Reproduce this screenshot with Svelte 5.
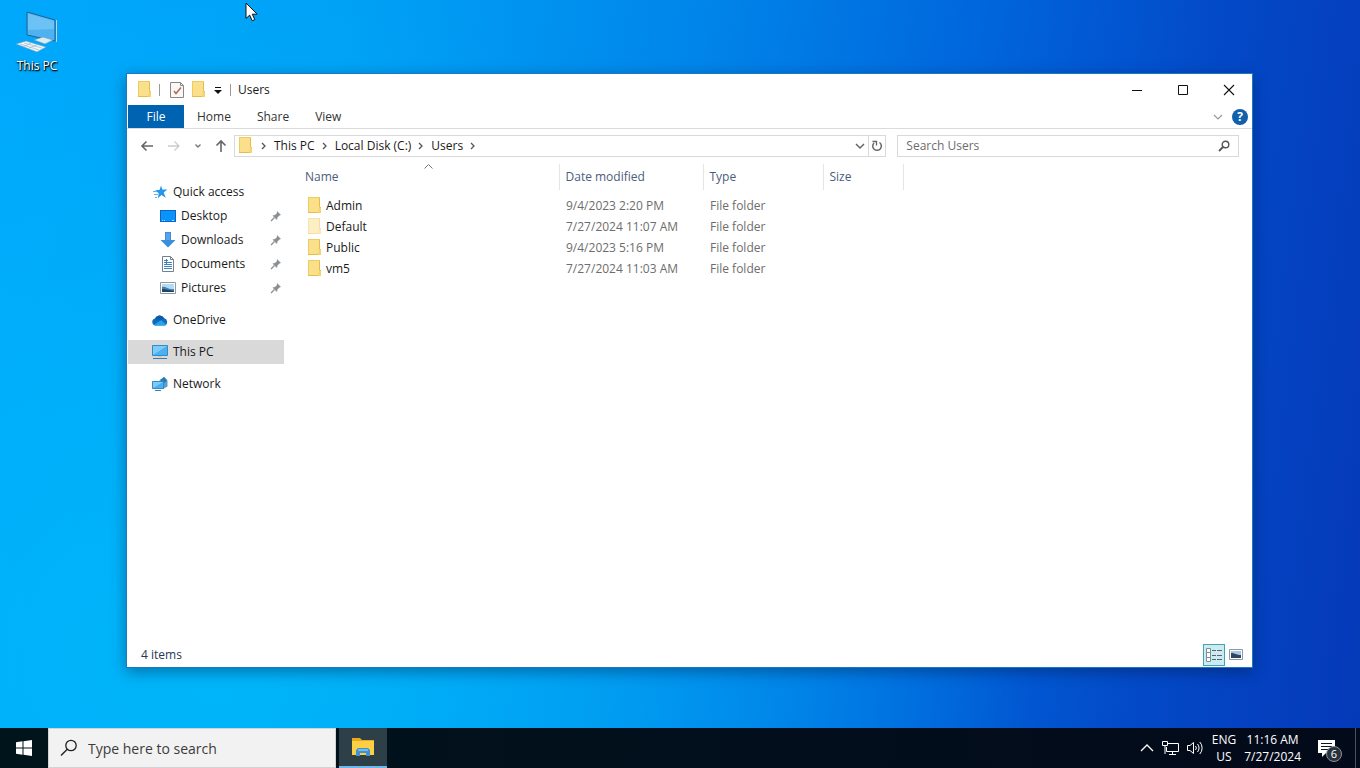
<script lang="ts">
  type NavItem = { label: string; icon: string; pinned?: boolean; top?: boolean; gap?: boolean };

  const tabs = ['Home', 'Share', 'View'];
  const crumbs = ['This PC', 'Local Disk (C:)', 'Users'];

  const navItems: NavItem[] = [
    { label: 'Quick access', icon: 'star', top: true },
    { label: 'Desktop', icon: 'desktop', pinned: true },
    { label: 'Downloads', icon: 'download', pinned: true },
    { label: 'Documents', icon: 'document', pinned: true },
    { label: 'Pictures', icon: 'picture', pinned: true },
    { label: 'OneDrive', icon: 'cloud', top: true, gap: true },
    { label: 'This PC', icon: 'pc', top: true, gap: true },
    { label: 'Network', icon: 'network', top: true, gap: true },
  ];

  const files = [
    { name: 'Admin', modified: '9/4/2023 2:20 PM' },
    { name: 'Default', modified: '7/27/2024 11:07 AM', hidden: true },
    { name: 'Public', modified: '9/4/2023 5:16 PM' },
    { name: 'vm5', modified: '7/27/2024 11:03 AM' },
  ];

  let selected = $state('This PC');
  let query = $state('');
  let taskbarQuery = $state('');
</script>

{#snippet folder(faded = false)}
  <svg class="folder" class:faded width="16" height="18" viewBox="0 0 16 18" aria-hidden="true">
    <path d="M1 0h12v16H1z" fill="#fbe08b" />
    <path d="M1 0h12v1H1zM1 1h1v15H1z" fill="#efcb62" />
    <path d="M12 1h1v9h1v6H1v-1h11z" fill="#e6bd4c" />
    <path d="M12 10l2 1v5h-3z" fill="#f5d36f" />
  </svg>
{/snippet}

{#snippet chevron()}
  <svg width="6" height="8" viewBox="0 0 6 8" aria-hidden="true">
    <path d="M1 1l3 3-3 3" fill="none" stroke="#555" stroke-width="1.3" />
  </svg>
{/snippet}

{#snippet navIcon(name: string)}
  <svg width="16" height="16" viewBox="0 0 16 16" aria-hidden="true">
    {#if name === 'star'}
      <path d="M9 1.500l1.300 4 5 0-3.600 3 2 5.200-4.200-2.700-3.700 3.300 1-5L3 6.500l4.700-.8z" fill="#2497e8" />
      <path d="M1 7.500h4M2 10.500h4M3 13.500h2" stroke="#5db7f2" />
    {:else if name === 'desktop'}
      <path d="M0 2h16v12H0z" fill="#0b66bd" />
      <path d="M1 3h14v10H1z" fill="#0a93fb" />
      <path d="M2 12.500h1M4 12.500h1M12 12.500h2" stroke="#a8dcff" />
    {:else if name === 'download'}
      <path d="M5 0h6v8h4.500L8 15.500.5 8H5z" fill="#3b8edb" />
      <path d="M6 1h4v7H6z" fill="#57a5e8" />
    {:else if name === 'document'}
      <path d="M2.500.5h8l3 3v12h-11z" fill="#fff" stroke="#73818e" />
      <path d="M10.500.5v3h3" fill="none" stroke="#73818e" />
      <path d="M4 4.500h4M4 6.500h8M4 8.500h8M4 10.500h8M4 12.500h8" stroke="#3c83c0" />
      <path d="M6.500 3v5" stroke="#3c83c0" />
    {:else if name === 'picture'}
      <path d="M.5 2.500h15v11H.5z" fill="#fff" stroke="#8b98a5" />
      <path d="M2 4h12v8H2z" fill="#b4dbf5" />
      <path d="M2 7c4-1 6 3 12 2v3H2z" fill="#4b7fa3" />
      <path d="M2 9c4 0 7 1 12 2v1H2z" fill="#1b4668" />
    {:else if name === 'cloud'}
      <path d="M3.500 13.500A3.500 3.500 0 0 1 3 6.600 5 5 0 0 1 12 6a4 4 0 0 1 1 7.500z" fill="#0f6cbd" />
      <path d="M2 13l7-5 5.500 5-1.500.5H3.500z" fill="#28a3ea" />
      <path d="M3 6.600A5 5 0 0 1 12 6L8.500 8.500z" fill="#0a5ba8" />
    {:else if name === 'pc'}
      <path d="M.5 1.500h15v10H.5z" fill="#4bb0f2" stroke="#2f8cc4" />
      <path d="M1 2h14L1 11z" fill="#7ccbf9" />
      <path d="M1 14.500h14" stroke="#417a9d" />
      <path d="M6 12.500h4" stroke="#b9ccd8" />
    {:else if name === 'network'}
      <path d="M7 5l5-4 3.500 3.500v6L11 13z" fill="#5d9fc8" />
      <path d="M8 4l4-3 3 3-2 3z" fill="#267cb5" />
      <path d="M.5 5.500h11v7H.5z" fill="#4bb0f2" stroke="#2f8cc4" />
      <path d="M1 6h10L1 12z" fill="#7ccbf9" />
      <path d="M3 14.500h6" stroke="#417a9d" />
    {/if}
  </svg>
{/snippet}

<div class="screen">
  <main class="desktop">
    <button class="shortcut">
      <svg width="48" height="46" viewBox="0 0 48 46" aria-hidden="true">
        <path d="M14 2l28 8v21l-28-6z" fill="#4fb2f0" stroke="#20638d" />
        <path d="M15 3.500l26 7.500v8L15 20z" fill="#6cc1f5" />
        <path d="M43.500 10v22" stroke="#b8d8ea" />
        <path d="M21 30l9-3 10 3-8 4z" fill="#dcecf5" stroke="#6d98b5" stroke-width=".6" />
        <path d="M3 34l10-3 20 6-9 5z" fill="#eef6fb" stroke="#6d98b5" stroke-width=".6" />
        <path d="M7 34l19 6M11 33l18 5M10 37l8-4M16 38l8-3" stroke="#9db9cb" stroke-width=".7" />
      </svg>
      <span>This PC</span>
    </button>

    <svg class="cursor" width="14" height="20" viewBox="0 0 14 20" aria-hidden="true">
      <path d="M1 1v15.500l3.700-3.400 2.500 5.700 2.600-1.200-2.500-5.400h4.900z" fill="#fff" stroke="#111" />
    </svg>

    <section class="window" aria-label="Users">
      <header class="titlebar">
        {@render folder()}
        <span class="divider"></span>
        <button class="quick" aria-label="Properties">
          <svg width="14" height="16" viewBox="0 0 14 16">
            <path d="M.5.5h10l3 3v12H.5z" fill="#faf7f7" stroke="#8d8583" />
            <path d="M10.500.5v3h3" fill="none" stroke="#8d8583" />
            <path d="M4 9l2 2.500L11 5.500" fill="none" stroke="#b06a58" stroke-width="1.500" />
          </svg>
        </button>
        <button class="quick" aria-label="New folder">{@render folder()}</button>
        <button class="quick menu" aria-label="Customize Quick Access Toolbar">
          <svg width="8" height="8" viewBox="0 0 8 8">
            <path d="M1 1.500h6" stroke="#111" />
            <path d="M0 4h8L4 8z" fill="#111" />
          </svg>
        </button>
        <span class="divider"></span>
        <h1>Users</h1>
        <div class="controls">
          <button aria-label="Minimize">
            <svg width="12" height="12" viewBox="0 0 12 12"><path d="M1 6.500h10" stroke="#111" /></svg>
          </button>
          <button aria-label="Maximize">
            <svg width="12" height="12" viewBox="0 0 12 12"><path d="M1.500 1.500h9v9h-9z" fill="none" stroke="#111" /></svg>
          </button>
          <button aria-label="Close">
            <svg width="12" height="12" viewBox="0 0 12 12"><path d="M1 1l10 10M11 1L1 11" stroke="#111" stroke-width="1.100" /></svg>
          </button>
        </div>
      </header>

      <nav class="ribbon" aria-label="Ribbon">
        <button class="file">File</button>
        {#each tabs as tab (tab)}
          <button>{tab}</button>
        {/each}
        <div class="ribbon-end">
          <button aria-label="Expand the Ribbon">
            <svg width="10" height="6" viewBox="0 0 10 6"><path d="M1 1l4 4 4-4" fill="none" stroke="#999" stroke-width="1.200" /></svg>
          </button>
          <button class="help" aria-label="Help">?</button>
        </div>
      </nav>

      <div class="address-row">
        <div class="history">
          <button aria-label="Back">
            <svg width="14" height="12" viewBox="0 0 14 12"><path d="M13 6H2M6.500 1.500L2 6l4.500 4.500" fill="none" stroke="#666" stroke-width="1.600" /></svg>
          </button>
          <button aria-label="Forward" disabled>
            <svg width="14" height="12" viewBox="0 0 14 12"><path d="M1 6h11M7.500 1.500L12 6l-4.500 4.500" fill="none" stroke="#ccc" stroke-width="1.300" /></svg>
          </button>
          <button class="recent" aria-label="Recent locations">
            <svg width="8" height="6" viewBox="0 0 8 6"><path d="M1.500 1.500L4 4l2.500-2.500" fill="none" stroke="#777" stroke-width="1.400" /></svg>
          </button>
          <button aria-label="Up">
            <svg width="12" height="14" viewBox="0 0 12 14"><path d="M6 13V2M1.500 6.500L6 2l4.500 4.500" fill="none" stroke="#666" stroke-width="1.600" /></svg>
          </button>
        </div>
        <div class="address">
          {@render folder()}
          <span class="sep">{@render chevron()}</span>
          {#each crumbs as crumb (crumb)}
            <button>{crumb}</button>
            <span class="sep">{@render chevron()}</span>
          {/each}
          <button class="drop" aria-label="Previous locations">
            <svg width="10" height="7" viewBox="0 0 10 7"><path d="M1 1l4 4 4-4" fill="none" stroke="#666" stroke-width="1.500" /></svg>
          </button>
          <button class="refresh" aria-label="Refresh">
            <svg width="12" height="12" viewBox="0 0 12 12">
              <path d="M8.500 2.500A4.300 4.300 0 1 1 3 3" fill="none" stroke="#666" stroke-width="1.500" />
              <path d="M1.500 1.500h4v4" fill="none" stroke="#666" stroke-width="1.300" />
            </svg>
          </button>
        </div>
        <label class="search">
          <input type="text" placeholder="Search Users" aria-label="Search Users" bind:value={query} />
          <svg width="12" height="12" viewBox="0 0 12 12" aria-hidden="true">
            <circle cx="7.500" cy="4.500" r="3.300" fill="none" stroke="#555" stroke-width="1.400" />
            <path d="M5 7L1 11" stroke="#555" stroke-width="1.800" />
          </svg>
        </label>
      </div>

      <div class="content">
        <ul class="tree">
          {#each navItems as item (item.label)}
            <li class:gap={item.gap}>
              <button
                class:top={item.top}
                class:selected={selected === item.label}
                onclick={() => (selected = item.label)}
              >
                {@render navIcon(item.icon)}
                <span>{item.label}</span>
                {#if item.pinned}
                  <svg class="pin" width="12" height="12" viewBox="0 0 12 12" aria-hidden="true">
                    <path d="M7 1l4 4-1.500.5-2 2L7 10 2.500 5.500l2.500-.5 2-2z" fill="#8a8f94" />
                    <path d="M4.500 7.500L1 11" stroke="#8a8f94" stroke-width="1.200" />
                  </svg>
                {/if}
              </button>
            </li>
          {/each}
        </ul>

        <div class="list">
          <table>
            <colgroup>
              <col class="col-name" />
              <col class="col-date" />
              <col class="col-type" />
              <col class="col-size" />
            </colgroup>
            <thead>
              <tr>
                <th aria-sort="ascending">
                  Name
                  <svg class="sort" width="9" height="5" viewBox="0 0 9 5" aria-hidden="true">
                    <path d="M.5 4.500l4-4 4 4" fill="none" stroke="#777" />
                  </svg>
                </th>
                <th>Date modified</th>
                <th>Type</th>
                <th>Size</th>
              </tr>
            </thead>
            <tbody>
              {#each files as file (file.name)}
                <tr>
                  <td>
                    <div class="name">
                      {@render folder(file.hidden)}
                      <span>{file.name}</span>
                    </div>
                  </td>
                  <td>{file.modified}</td>
                  <td>File folder</td>
                  <td></td>
                </tr>
              {/each}
            </tbody>
          </table>
        </div>
      </div>

      <footer class="status">
        <span>{files.length} items</span>
        <div class="views">
          <button class="active" aria-label="Details view">
            <svg width="16" height="14" viewBox="0 0 16 14">
              <path d="M.5.5h4v13h-4zM.5 4.500h4M.5 9.500h4" fill="#fff" stroke="#7c8f99" />
              <path d="M6 2.500h4M11 2.500h5M6 7.500h4M11 7.500h5M6 11.500h4M11 11.500h5" stroke="#53656f" />
            </svg>
          </button>
          <button aria-label="Large icons view">
            <svg width="14" height="12" viewBox="0 0 14 12">
              <path d="M.5.5h13v10H.5z" fill="#fff" stroke="#8b98a5" />
              <path d="M2 2h10v7H2z" fill="#a9c6e6" />
              <path d="M2 4c4 0 5 2 10 2v3H2z" fill="#31465f" />
            </svg>
          </button>
        </div>
      </footer>
    </section>
  </main>

  <footer class="taskbar">
    <button class="start" aria-label="Start">
      <svg width="16" height="16" viewBox="0 0 16 16">
        <path d="M0 2.200L6.500 1.300v6.200H0zM7.500 1.200L16 0v7.500H7.500zM0 8.500h6.500v6.200L0 13.800zM7.500 8.500H16V16l-8.500-1.200z" fill="#fff" />
      </svg>
    </button>
    <label class="taskbar-search">
      <svg width="18" height="18" viewBox="0 0 18 18" aria-hidden="true">
        <circle cx="11" cy="6.500" r="5.200" fill="none" stroke="#222" stroke-width="1.300" />
        <path d="M7.300 10.200L1 16.500" stroke="#222" stroke-width="1.400" />
      </svg>
      <input type="text" placeholder="Type here to search" aria-label="Type here to search" bind:value={taskbarQuery} />
    </label>
    <button class="app" aria-label="File Explorer">
      <svg width="22" height="18" viewBox="0 0 22 18">
        <path d="M0 0h8l2 2h12v15H0z" fill="#e9a820" />
        <path d="M0 3h22v14H0z" fill="#fbd045" />
        <path d="M4 18v-6l2-2h10l2 2v6h-4v-3H8v3z" fill="#3f91d0" />
        <path d="M6 11h10v2H6z" fill="#75b9e8" />
      </svg>
    </button>
    <div class="tray">
      <button aria-label="Show hidden icons">
        <svg width="14" height="8" viewBox="0 0 14 8"><path d="M1 7l6-6 6 6" fill="none" stroke="#fff" stroke-width="1.300" /></svg>
      </button>
      <button aria-label="Network">
        <svg width="17" height="16" viewBox="0 0 17 16">
          <path d="M6 3.500h10.500v8H4.500V7M10.500 12v2.500M7 14.500h7" fill="none" stroke="#fff" />
          <path d="M.5 1.500h5v4h-5zM3 6v8" fill="none" stroke="#fff" />
        </svg>
      </button>
      <button aria-label="Volume">
        <svg width="17" height="14" viewBox="0 0 17 14">
          <path d="M.5 4.500H3l3.500-3v11L3 9.500H.5zM8.500 5a3 3 0 0 1 0 4M10.500 3a6 6 0 0 1 0 8M12.800 1a9 9 0 0 1 0 12" fill="none" stroke="#fff" />
        </svg>
      </button>
      <button class="two-line"><span>ENG</span><span>US</span></button>
      <button class="two-line"><span>11:16 AM</span><span>7/27/2024</span></button>
      <button class="notifications" aria-label="6 new notifications">
        <svg width="18" height="17" viewBox="0 0 18 17">
          <path d="M0 0h17v13H8l-4 4v-4H0z" fill="#fff" />
          <path d="M3 3.500h11M3 6.500h11M3 9.500h7" stroke="#0a1622" />
        </svg>
        <span class="count">6</span>
      </button>
      <button class="show-desktop" aria-label="Show desktop"></button>
    </div>
  </footer>
</div>

<style>
  :global(body) {
    margin: 0;
  }

  .screen {
    display: flex;
    flex-direction: column;
    min-height: 100vh;
    font-family: 'Open Sans', 'Noto Sans', sans-serif;
    font-size: 12px;
    line-height: 16px;
    color: #1a1a1a;
  }

  button,
  input {
    margin: 0;
    padding: 0;
    border: 0;
    background: none;
    color: inherit;
    font: inherit;
  }

  svg {
    display: block;
    flex: none;
  }

  /* Desktop */
  .desktop {
    position: relative;
    flex: 1;
    background:
      radial-gradient(ellipse 60% 90% at 16% 90%, rgba(0, 184, 250, 0.9), rgba(0, 184, 250, 0) 100%),
      linear-gradient(97deg, #00a8fc 0%, #00a2f6 24%, #0086ea 48%, #0066dc 68%, #034ac8 84%, #0539b8 100%);
  }

  .shortcut {
    display: flex;
    flex-direction: column;
    align-items: center;
    gap: 2px;
    width: 74px;
    padding-top: 10px;
    color: #fff;
    text-shadow: 0 1px 2px #000, 1px 1px 1px #000;
  }

  .cursor {
    position: absolute;
    top: 2px;
    left: 245px;
  }

  .window {
    position: absolute;
    inset: 73px 107px 60px 126px;
    display: flex;
    flex-direction: column;
    border: 1px solid #1b79c0;
    background: #fff;
    box-shadow: 0 4px 14px rgba(0, 20, 60, 0.4);
  }

  /* Title bar */
  .titlebar {
    display: flex;
    align-items: center;
    height: 31px;
    padding-left: 10px;
  }

  .titlebar h1 {
    margin: 0 0 0 7px;
    font-size: 12px;
    font-weight: 400;
  }

  .folder.faded {
    opacity: 0.5;
  }

  .divider {
    width: 1px;
    height: 12px;
    margin-left: 6px;
    background: #999;
  }

  .quick {
    margin-left: 10px;
  }

  .quick + .quick {
    margin-left: 7px;
  }

  .divider ~ .divider {
    margin-left: 8px;
  }

  .controls {
    display: flex;
    align-self: stretch;
    margin-left: auto;
  }

  .controls button {
    display: grid;
    place-items: center;
    width: 46px;
  }

  /* Ribbon tabs */
  .ribbon {
    display: flex;
    height: 23px;
    border-bottom: 1px solid #dadbdc;
    color: #333;
  }

  .ribbon > button {
    padding: 0 13px;
  }

  .ribbon > .file {
    width: 56px;
    margin-left: 1px;
    background: #0063b1;
    color: #fff;
  }

  .ribbon-end {
    display: flex;
    align-items: center;
    gap: 9px;
    margin-left: auto;
    padding-right: 4px;
  }

  .help {
    width: 16px;
    height: 16px;
    border-radius: 50%;
    background: #1260ac;
    color: #fff;
    font-weight: 700;
  }

  /* Address row */
  .address-row {
    box-sizing: border-box;
    display: flex;
    align-items: center;
    height: 35px;
    padding: 0 13px 1px 0;
  }

  .history {
    display: flex;
    align-items: center;
    justify-content: space-between;
    width: 87px;
    margin: 0 7px 0 13px;
  }

  .address,
  .search {
    box-sizing: border-box;
    display: flex;
    align-items: center;
    height: 22px;
    border: 1px solid #d9d9d9;
  }

  .address {
    flex: 2;
    padding-left: 3px;
  }

  .sep {
    display: grid;
    place-items: center;
    width: 20px;
  }

  .drop {
    margin-left: auto;
    padding-right: 3px;
  }

  .refresh {
    align-self: stretch;
    padding: 0 2px;
    border-left: 1px solid #d9d9d9;
  }

  .search {
    flex: 1;
    margin-left: 11px;
    padding: 0 8px;
  }

  .search input,
  .taskbar-search input {
    flex: 1;
    min-width: 0;
    outline: 0;
  }

  .search input::placeholder {
    color: #6d6d6d;
    opacity: 1;
  }

  /* Navigation pane and file list */
  .content {
    display: flex;
    flex: 1;
  }

  .tree {
    box-sizing: border-box;
    width: 157px;
    margin: 0;
    padding: 16px 0 0 1px;
    list-style: none;
  }

  .tree .gap {
    margin-top: 8px;
  }

  .tree button {
    display: flex;
    align-items: center;
    gap: 5px;
    width: 100%;
    height: 24px;
    padding: 0 2px 0 32px;
  }

  .tree .top {
    padding-left: 24px;
  }

  .tree .selected {
    background: #d9d9d9;
  }

  .pin {
    margin-left: auto;
  }

  .list {
    flex: 1;
    margin-left: 13px;
  }

  table {
    width: 606px;
    border-collapse: collapse;
    table-layout: fixed;
  }

  .col-name {
    width: 262px;
  }

  .col-date {
    width: 144px;
  }

  .col-type {
    width: 120px;
  }

  .col-size {
    width: 80px;
  }

  th {
    position: relative;
    height: 26px;
    padding: 0 0 0 6px;
    border-right: 1px solid #e5e5e5;
    color: #4c5d7c;
    font-weight: 400;
    text-align: left;
  }

  th:first-child {
    padding-left: 8px;
  }

  .sort {
    position: absolute;
    top: 0;
    left: calc(50% - 4px);
  }

  tbody::before {
    display: block;
    height: 5px;
    content: '';
  }

  td {
    height: 21px;
    padding: 0 0 0 7px;
    color: #6d6d6d;
  }

  td:first-child {
    padding-left: 10px;
    color: #1a1a1a;
  }

  .name {
    display: flex;
    align-items: center;
    gap: 3px;
  }

  /* Status bar */
  .status {
    display: flex;
    align-items: center;
    justify-content: space-between;
    height: 24px;
    padding: 0 5px 0 14px;
    color: #1e395b;
  }

  .views {
    display: flex;
  }

  .views button {
    box-sizing: border-box;
    display: grid;
    place-items: center;
    width: 22px;
    height: 22px;
  }

  .views .active {
    border: 1px solid #3fa4b8;
    background: #ccebf0;
  }

  /* Taskbar */
  .taskbar {
    display: flex;
    height: 40px;
    background: linear-gradient(90deg, #00141b, #020f1c 50%, #030a1a);
    color: #fff;
  }

  .start,
  .app {
    display: grid;
    place-items: center;
    width: 48px;
  }

  .taskbar-search {
    box-sizing: border-box;
    display: flex;
    align-items: center;
    gap: 10px;
    width: 288px;
    padding-left: 11px;
    border: 1px solid #d0d4d6;
    background: #f2f2f2;
    color: #333;
    font-size: 14px;
  }

  .taskbar-search input {
    height: 24px;
  }

  .taskbar-search input::placeholder {
    color: #3c3c3c;
    opacity: 1;
  }

  .app {
    margin-left: 3px;
    border-bottom: 2px solid #6cb8ec;
    background: #2d3f47;
  }

  .tray {
    display: flex;
    align-items: center;
    gap: 8px;
    margin-left: auto;
  }

  .two-line {
    display: flex;
    flex-direction: column;
    align-items: center;
    line-height: 17px;
  }

  .notifications {
    position: relative;
    margin: 0 11px 0 9px;
  }

  .count {
    position: absolute;
    top: 6px;
    left: 8px;
    width: 14px;
    height: 14px;
    border: 1px solid #8a9299;
    border-radius: 50%;
    background: #29323b;
    font-size: 11px;
    line-height: 14px;
  }

  .show-desktop {
    align-self: stretch;
    width: 5px;
    border-left: 1px solid #4a545e;
  }
</style>
